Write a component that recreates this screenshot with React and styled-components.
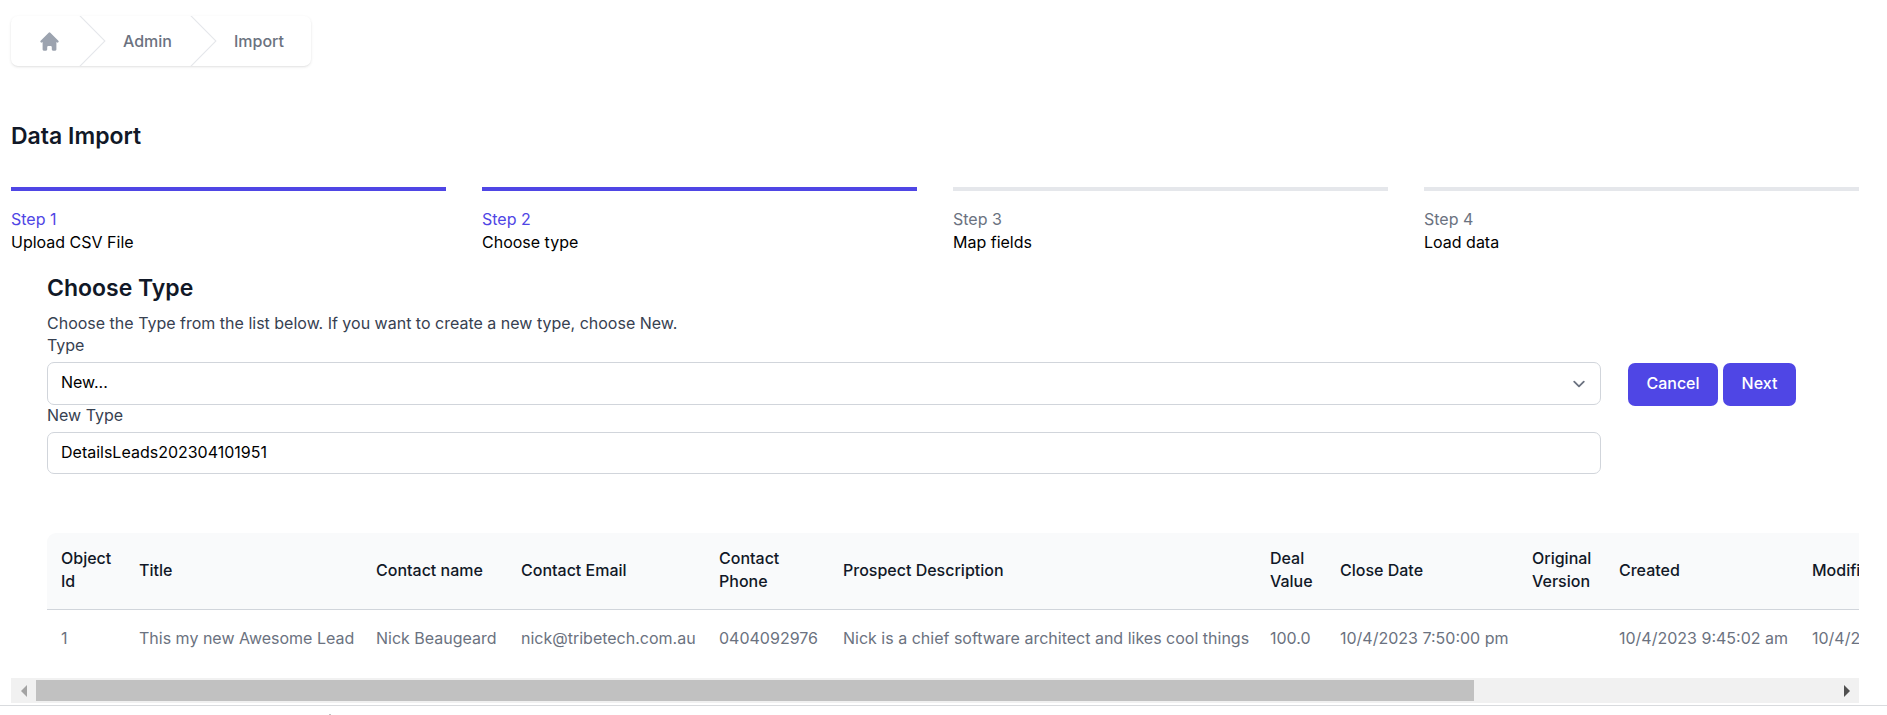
import React, { useRef, useState } from "react";
import styled, { createGlobalStyle } from "styled-components";

const GlobalStyle = createGlobalStyle`
  *, *::before, *::after { box-sizing: border-box; }
  body {
    margin: 0;
    background: #fff;
    color: #000;
    font-family: Inter, "Liberation Sans", sans-serif;
    font-size: 16px;
    line-height: 23px;
  }
`;

const Page = styled.main`
  padding: 16px 28px 2px 11px;
`;

const Breadcrumb = styled.nav`
  display: flex;
`;

const CrumbList = styled.ol`
  display: flex;
  height: 50px;
  margin: 0;
  padding: 0 27px;
  list-style: none;
  border-radius: 7px;
  box-shadow: 0 1px 3px rgba(0, 0, 0, 0.1), 0 1px 2px -1px rgba(0, 0, 0, 0.1);
`;

const Crumb = styled.li`
  display: flex;
  align-items: center;
`;

const CrumbLink = styled.a`
  display: flex;
  color: ${(p) => (p.$icon ? "#9ca3af" : "#6b7280")};
  font-weight: 500;
  text-decoration: none;
`;

const Chevron = styled.svg`
  width: 27px;
  height: 50px;
  margin-right: 17px;
  margin-left: 18px;
  fill: #e5e7eb;
`;

const PageTitle = styled.h1`
  margin: 54px 0 34px;
  color: #111827;
  font-size: 23px;
  font-weight: 600;
  line-height: 33px;
`;

const Steps = styled.ol`
  display: grid;
  grid-template-columns: repeat(4, 1fr);
  gap: 36px;
  margin: 0;
  padding: 0;
  list-style: none;
`;

const Step = styled.li`
  display: flex;
  flex-direction: column;
  padding-top: 17px;
  border-top: 4px solid ${(p) => (p.$done ? "#4f46e5" : "#e5e7eb")};
`;

const StepNumber = styled.span`
  color: ${(p) => (p.$done ? "#4f46e5" : "#6b7280")};
`;

const Section = styled.section`
  padding: 18px 63px 0 36px;
`;

const SectionTitle = styled.h2`
  margin: 0;
  color: #111827;
  font-size: 23px;
  font-weight: 600;
  line-height: 33px;
`;

const Hint = styled.p`
  margin: 7px 0 0;
  color: #374151;
  line-height: 23px;
`;

const Form = styled.form`
  display: flex;
  align-items: flex-start;
  gap: 27px;
`;

const Fields = styled.div`
  display: flex;
  flex: 1;
  flex-direction: column;
`;

const Label = styled.label`
  margin-bottom: 7px;
  color: #374151;
  line-height: 20px;
`;

const SelectWrap = styled.div`
  display: grid;
  align-items: center;

  > * { grid-area: 1 / 1; }
`;

const controlStyle = `
  width: 100%;
  margin: 0;
  padding: 0 13px 2px;
  border: 1px solid #d1d5db;
  border-radius: 7px;
  background: #fff;
  color: #000;
  font: inherit;
`;

const Select = styled.select`
  ${controlStyle}
  height: 43px;
  appearance: none;
`;

const SelectArrow = styled.svg`
  justify-self: end;
  width: 24px;
  height: 24px;
  margin-right: 10px;
  pointer-events: none;
`;

const Input = styled.input`
  ${controlStyle}
  height: 42px;
`;

const Actions = styled.div`
  display: flex;
  gap: 5px;
  width: 168px;
  padding-top: 28px;
`;

const Button = styled.button`
  flex: ${(p) => (p.$wide ? 90 : 73)} 0 0;
  height: 43px;
  padding: 0 0 2px;
  border: 0;
  border-radius: 7px;
  background: #4f46e5;
  color: #fff;
  font: inherit;
  font-weight: 500;
`;

const TableViewport = styled.div`
  margin-top: 59px;
  padding-left: 36px;
  overflow: hidden;
`;

const TableCard = styled.div`
  width: 2274px;
  border-radius: 9px;
  overflow: hidden;
`;

const Table = styled.table`
  width: 100%;
  table-layout: fixed;
  border-collapse: collapse;
  text-align: left;
`;

const Col = styled.col`
  width: ${(p) => p.$width}px;
`;

const HeadCell = styled.th`
  height: 76px;
  padding: 0 14px 1px;
  border-bottom: 1px solid #d1d5db;
  background: #f9fafb;
  color: #111827;
  font-weight: 500;
`;

const Cell = styled.td`
  height: 58px;
  padding: 0 14px;
  color: #6b7280;
  white-space: nowrap;
`;

const ScrollBar = styled.div`
  display: flex;
  height: 25px;
  margin-top: 11px;
  background: #f1f1f1;
`;

const ScrollButton = styled.button`
  display: flex;
  align-items: center;
  justify-content: center;
  width: 25px;
  padding: 0;
  border: 0;
  background: transparent;
  color: ${(p) => (p.disabled ? "#a3a3a3" : "#505050")};
`;

const ScrollLane = styled.div`
  display: flex;
  flex: 1;
  padding: 2px 0;
`;

const ScrollThumb = styled.div`
  width: 80%;
  background: #c1c1c1;
`;

const Footer = styled.footer`
  display: flex;
  align-items: flex-end;
  height: 10px;
  padding-left: 329px;
  border-top: 1px solid #d9dbde;
`;

const FooterMark = styled.span`
  width: 2px;
  height: 1px;
  background: #c1c1c1;
`;

const steps = [
  { number: "Step 1", name: "Upload CSV File", done: true },
  { number: "Step 2", name: "Choose type", done: true },
  { number: "Step 3", name: "Map fields", done: false },
  { number: "Step 4", name: "Load data", done: false },
];

const columns = [
  { title: "Object Id", value: "1", width: 78 },
  { title: "Title", value: "This my new Awesome Lead", width: 237 },
  { title: "Contact name", value: "Nick Beaugeard", width: 145 },
  { title: "Contact Email", value: "nick@tribetech.com.au", width: 198 },
  { title: "Contact Phone", value: "0404092976", width: 124 },
  { title: "Prospect Description", value: "Nick is a chief software architect and likes cool things", width: 427 },
  { title: "Deal Value", value: "100.0", width: 70 },
  { title: "Close Date", value: "10/4/2023 7:50:00 pm", width: 192 },
  { title: "Original Version", value: "", width: 87 },
  { title: "Created", value: "10/4/2023 9:45:02 am", width: 193 },
  { title: "Modified", value: "10/4/2023 9:45:02 am", width: 523 },
];

function CrumbChevron() {
  return (
    <Chevron viewBox="0 0 24 44" preserveAspectRatio="none" aria-hidden="true">
      <path d="M.293 0l22 22-22 22h1.414l22-22-22-22H.293z" />
    </Chevron>
  );
}

function DataTable() {
  const viewport = useRef(null);
  const [ratio, setRatio] = useState(0);

  const scroll = (amount) => {
    const el = viewport.current;
    el.scrollLeft += amount;
    setRatio(el.scrollLeft / (el.scrollWidth - el.clientWidth));
  };

  return (
    <>
      <TableViewport ref={viewport}>
        <TableCard>
          <Table>
            <colgroup>
              {columns.map((c) => <Col key={c.title} $width={c.width} />)}
            </colgroup>
            <thead>
              <tr>{columns.map((c) => <HeadCell key={c.title} scope="col">{c.title}</HeadCell>)}</tr>
            </thead>
            <tbody>
              <tr>{columns.map((c) => <Cell key={c.title}>{c.value}</Cell>)}</tr>
            </tbody>
          </Table>
        </TableCard>
      </TableViewport>
      <ScrollBar>
        <ScrollButton type="button" aria-label="Scroll left" disabled={ratio === 0} onClick={() => scroll(-80)}>
          <svg width="6" height="12" viewBox="0 0 6 12" fill="currentColor"><path d="M6 0v12L0 6z" /></svg>
        </ScrollButton>
        <ScrollLane>
          <ScrollThumb style={{ marginLeft: `${ratio * 20}%` }} />
        </ScrollLane>
        <ScrollButton type="button" aria-label="Scroll right" disabled={ratio >= 1} onClick={() => scroll(80)}>
          <svg width="6" height="12" viewBox="0 0 6 12" fill="currentColor"><path d="M0 0v12l6-6z" /></svg>
        </ScrollButton>
      </ScrollBar>
    </>
  );
}

export default function App() {
  const [newType, setNewType] = useState("DetailsLeads202304101951");

  return (
    <>
      <GlobalStyle />
      <Page>
        <Breadcrumb aria-label="Breadcrumb">
          <CrumbList>
            <Crumb>
              <CrumbLink href="#" $icon aria-label="Home">
                <svg width="23" height="23" viewBox="0 0 20 20" fill="currentColor" aria-hidden="true">
                  <path d="M10.707 2.293a1 1 0 00-1.414 0l-7 7a1 1 0 001.414 1.414L4 10.414V17a1 1 0 001 1h2a1 1 0 001-1v-2a1 1 0 011-1h2a1 1 0 011 1v2a1 1 0 001 1h2a1 1 0 001-1v-6.586l.293.293a1 1 0 001.414-1.414l-7-7z" />
                </svg>
              </CrumbLink>
            </Crumb>
            <Crumb>
              <CrumbChevron />
              <CrumbLink href="#">Admin</CrumbLink>
            </Crumb>
            <Crumb>
              <CrumbChevron />
              <CrumbLink href="#" aria-current="page">Import</CrumbLink>
            </Crumb>
          </CrumbList>
        </Breadcrumb>

        <PageTitle>Data Import</PageTitle>

        <Steps>
          {steps.map((s) => (
            <Step key={s.number} $done={s.done}>
              <StepNumber $done={s.done}>{s.number}</StepNumber>
              <span>{s.name}</span>
            </Step>
          ))}
        </Steps>

        <Section>
          <SectionTitle>Choose Type</SectionTitle>
          <Hint>Choose the Type from the list below. If you want to create a new type, choose New.</Hint>
          <Form onSubmit={(e) => e.preventDefault()}>
            <Fields>
              <Label htmlFor="type">Type</Label>
              <SelectWrap>
                <Select id="type" defaultValue="new">
                  <option value="new">New...</option>
                </Select>
                <SelectArrow viewBox="0 0 20 20" fill="none" stroke="#6b7280" strokeWidth="1.5" strokeLinecap="round" strokeLinejoin="round" aria-hidden="true">
                  <path d="M6 8l4 4 4-4" />
                </SelectArrow>
              </SelectWrap>
              <Label htmlFor="new-type">New Type</Label>
              <Input id="new-type" type="text" value={newType} onChange={(e) => setNewType(e.target.value)} />
            </Fields>
            <Actions>
              <Button type="button" $wide>Cancel</Button>
              <Button type="submit">Next</Button>
            </Actions>
          </Form>
        </Section>

        <DataTable />
      </Page>
      <Footer>
        <FooterMark />
      </Footer>
    </>
  );
}
